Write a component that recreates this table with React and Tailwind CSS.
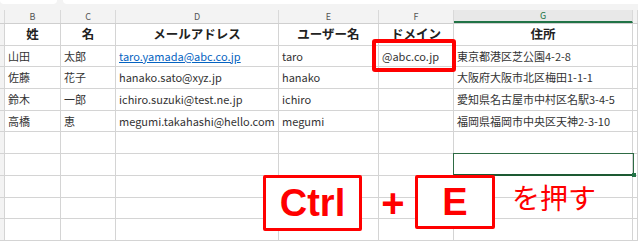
const cols = [
  { key: "stub", w: 5, label: "" },
  { key: "B", w: 56, label: "B" },
  { key: "C", w: 55, label: "C" },
  { key: "D", w: 163, label: "D" },
  { key: "E", w: 100, label: "E" },
  { key: "F", w: 75, label: "F" },
  { key: "G", w: 179, label: "G" },
  { key: "H", w: 5, label: "" },
];

const header = ["", "姓", "名", "メールアドレス", "ユーザー名", "ドメイン", "住所", "都"];

const people = [
  ["山田", "太郎", "taro.yamada@abc.co.jp", "taro", "@abc.co.jp", "東京都港区芝公園4-2-8"],
  ["佐藤", "花子", "hanako.sato@xyz.jp", "hanako", "", "大阪府大阪市北区梅田1-1-1"],
  ["鈴木", "一郎", "ichiro.suzuki@test.ne.jp", "ichiro", "", "愛知県名古屋市中村区名駅3-4-5"],
  ["高橋", "恵", "megumi.takahashi@hello.com", "megumi", "", "福岡県福岡市中央区天神2-3-10"],
];

const emptyRows = [0, 1, 2, 3, 4, 5];

function Cell({ w, children, className = "" }) {
  return (
    <div
      className={`shrink-0 h-full border-r border-[#d4d4d4] flex items-center overflow-hidden whitespace-nowrap ${className}`}
      style={{ width: w }}
    >
      {children}
    </div>
  );
}

function Row({ children }) {
  return <div className="flex h-[21.7px] border-b border-[#d4d4d4]">{children}</div>;
}

export default function App() {
  return (
    <div
      className="relative w-[638px] h-[241px] overflow-hidden bg-white text-[#333]"
      style={{ fontFamily: '"Noto Sans CJK JP", "Noto Sans", sans-serif' }}
    >
      {/* formula bar edge */}
      <div className="flex gap-[6px] h-[10px] bg-[#f3f3f3]">
        <div className="w-[57px] h-[4px] bg-white rounded-b-[4px]" />
        <div className="flex-1 h-[4px] bg-white rounded-bl-[4px]" />
      </div>

      {/* column letters */}
      <div className="flex h-[14px] bg-[#f3f3f3] border-b border-[#cfcfcf]">
        {cols.map((c) => (
          <div
            key={c.key}
            className={`shrink-0 h-full border-r border-[#d9d9d9] flex items-center justify-center text-[9px] leading-none ${
              c.key === "G" ? "bg-[#e8e8e8] border-b-2 border-b-[#217346] text-[#217346]" : "text-[#555]"
            }`}
            style={{ width: c.w }}
          >
            {c.label}
          </div>
        ))}
      </div>

      {/* header row */}
      <Row>
        {cols.map((c, i) => (
          <Cell key={c.key} w={c.w} className={`justify-center font-bold text-[12.5px] text-[#222] ${i === 0 ? "bg-[#f3f3f3]" : ""}`}>
            {i === 7 ? "" : header[i]}
          </Cell>
        ))}
      </Row>

      {people.map((p) => (
        <Row key={p[2]}>
          <Cell w={5} className="bg-[#f3f3f3]" />
          {p.map((v, j) => (
            <Cell
              key={j}
              w={cols[j + 1].w}
              className={`px-[3px] text-[11px] ${j === 2 && v.startsWith("taro") ? "text-[#0563c1] underline" : ""}`}
            >
              {v}
            </Cell>
          ))}
          <Cell w={5} />
        </Row>
      ))}

      {emptyRows.map((r) => (
        <Row key={r}>
          {cols.map((c, i) => (
            <Cell key={c.key} w={c.w} className={i === 0 ? "bg-[#f3f3f3]" : ""} />
          ))}
        </Row>
      ))}

      {/* selected cell G7 */}
      <div className="absolute left-[453px] top-[153px] w-[181px] h-[23px] border border-[#2e6b44] border-b-2 border-b-[#1d5a33]">
        <div className="absolute -right-[3px] -bottom-[3px] w-[4px] h-[4px] bg-[#217346]" />
      </div>

      {/* callout on F2 */}
      <div className="absolute left-[372px] top-[39px] w-[84px] h-[33px] border-[4px] border-[#ff0000] rounded-[3px]" />

      {/* shortcut hint */}
      <div className="absolute left-[263px] top-[175px] w-[99px] h-[56px] border-[3px] border-[#ff0000] rounded-[2px] bg-white flex items-center justify-center">
        <span className="text-[38px] font-bold text-[#ff0000] leading-none" style={{ fontFamily: '"Liberation Sans", Arial, sans-serif' }}>
          Ctrl
        </span>
      </div>
      <div
        className="absolute left-[378px] top-[180px] w-[30px] h-[46px] flex items-center justify-center text-[40px] font-bold text-[#ff0000] leading-none"
        style={{ fontFamily: '"Liberation Sans", Arial, sans-serif' }}
      >
        +
      </div>
      <div className="absolute left-[415px] top-[175px] w-[80px] h-[54px] border-[3px] border-[#ff0000] rounded-[2px] bg-white flex items-center justify-center">
        <span className="text-[38px] font-bold text-[#ff0000] leading-none" style={{ fontFamily: '"Liberation Sans", Arial, sans-serif' }}>
          E
        </span>
      </div>
      <div className="absolute left-[512px] top-[183px] text-[28px] leading-none text-[#ff0000]">を押す</div>
    </div>
  );
}
